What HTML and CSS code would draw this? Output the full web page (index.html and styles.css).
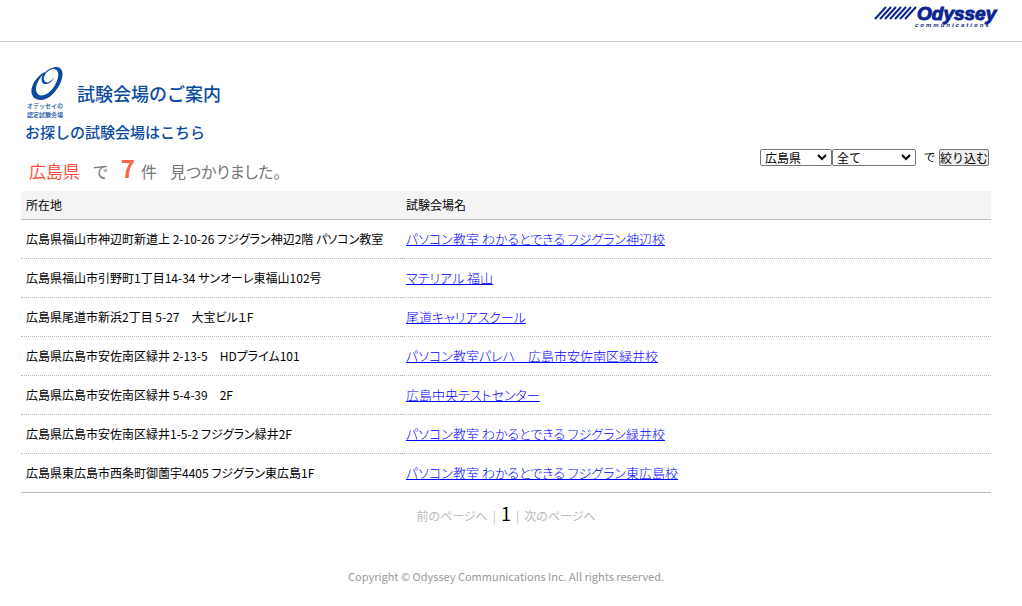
FILE: index.html
```html
<!DOCTYPE html>
<html lang="ja">
<head>
<meta charset="utf-8">
<title>試験会場のご案内</title>
<link rel="stylesheet" href="styles.css">
</head>
<body>
<header class="site-header">
  <svg class="brand" width="126" height="26" viewBox="0 0 126 26" role="img" aria-label="Odyssey communications">
    <path class="brand-lines" d="M1 15 12 3M6 15 17 3M11 15 22 3M16 15 27 3M21 15 32 3M26 15 37 3M31 15 42 3"/>
    <text class="brand-name" x="43" y="16">Odyssey</text>
    <text class="brand-sub" x="41" y="23">communications</text>
  </svg>
</header>
<main class="content">
  <div class="title-row">
    <svg class="emblem" width="40" height="54" viewBox="0 0 40 54" aria-hidden="true">
      <path fill="#0b4a9e" fill-rule="evenodd" d="M27 2C35 -1 39 4 37 12C35 22 25 34 16 34C8 34 5 28 7 21C9 14 16 7 22 5C13 12 9 22 12 27C15 32 23 29 28 22C34 14 36 3 28 3C22 4 18 10 19 14C20 18 26 17 29 11C27 18 19 20 17 16C15 11 20 4 27 2Z"/>
      <text class="emblem-text" x="2" y="42">オデッセイの</text>
      <text class="emblem-text" x="2" y="51">認定試験会場</text>
    </svg>
    <h1 class="title">試験会場のご案内</h1>
  </div>
  <h2 class="subtitle">お探しの試験会場はこちら</h2>
  <div class="summary">
    <p class="result"><span class="place">広島県</span><span>で</span><strong class="count">7</strong><span class="unit">件</span><span>見つかりました。</span></p>
    <form class="filter">
      <select class="select pref" aria-label="都道府県"><option>広島県</option></select>
      <select class="select exam" aria-label="試験"><option>全て</option></select>
      <span class="filter-word">で</span>
      <button class="filter-button" type="button">絞り込む</button>
    </form>
  </div>
  <table class="venues">
    <thead><tr><th class="address">所在地</th><th>試験会場名</th></tr></thead>
    <tbody>
      <tr><td>広島県福山市神辺町新道上 2-10-26 フジグラン神辺2階 パソコン教室</td><td><a href="#">パソコン教室 わかるとできる フジグラン神辺校</a></td></tr>
      <tr><td>広島県福山市引野町1丁目14-34 サンオーレ東福山102号</td><td><a href="#">マテリアル 福山</a></td></tr>
      <tr><td>広島県尾道市新浜2丁目 5-27　大宝ビル１F</td><td><a href="#">尾道キャリアスクール</a></td></tr>
      <tr><td>広島県広島市安佐南区緑井 2-13-5　HDプライム101</td><td><a href="#">パソコン教室パレハ　広島市安佐南区緑井校</a></td></tr>
      <tr><td>広島県広島市安佐南区緑井 5-4-39　2F</td><td><a href="#">広島中央テストセンター</a></td></tr>
      <tr><td>広島県広島市安佐南区緑井1-5-2 フジグラン緑井2F</td><td><a href="#">パソコン教室 わかるとできる フジグラン緑井校</a></td></tr>
      <tr><td>広島県東広島市西条町御薗宇4405 フジグラン東広島1F</td><td><a href="#">パソコン教室 わかるとできる フジグラン東広島校</a></td></tr>
    </tbody>
  </table>
  <nav class="pager"><span>前のページへ</span><span>|</span><strong class="current">1</strong><span>|</span><span>次のページへ</span></nav>
</main>
<footer class="footer">Copyright © Odyssey Communications Inc. All rights reserved.</footer>
</body>
</html>
```

FILE: styles.css
```css
* { box-sizing: border-box; }
body {
  margin: 0;
  background: #fff;
  color: #000;
  font: 12px/18px "Noto Sans CJK JP", sans-serif;
  font-feature-settings: "palt";
}
.site-header {
  display: flex;
  justify-content: flex-end;
  height: 42px;
  padding: 4px 22px 0 0;
  border-bottom: 1px solid #ccc;
}
.brand { overflow: visible; }
.brand-lines { fill: none; stroke: #0b2590; stroke-width: 2; }
.brand-name {
  font: italic bold 19px "Liberation Sans", sans-serif;
  fill: #0b2590;
  stroke: #0b2590;
  stroke-width: 1;
}
.brand-sub {
  font: italic bold 6px "Liberation Sans", sans-serif;
  letter-spacing: 2px;
  fill: #0b2590;
}
.content { padding: 24px 31px 0 21px; }
.title-row { display: flex; align-items: center; gap: 12px; padding-left: 4px; }
.emblem-text { font: 6px "Noto Sans CJK JP", sans-serif; font-weight: 500; fill: #0b4a9e; }
.title { margin: 0; font-size: 18px; line-height: 24px; font-weight: 500; color: #0b4a9e; font-feature-settings: normal; }
.subtitle { margin: 0; padding: 2px 0 0 4px; font-size: 15px; line-height: 20px; font-weight: 500; color: #0b4a9e; font-feature-settings: normal; }
.summary { display: flex; justify-content: space-between; align-items: flex-start; margin-top: 6px; height: 43px; }
.result {
  display: flex;
  align-items: baseline;
  gap: 13px;
  margin: 0;
  padding: 5px 0 0 8px;
  font-size: 16px;
  line-height: 30px;
  color: #777;
}
.place { font-size: 17px; color: #ff4f40; }
.count { font-size: 24px; font-weight: 700; color: #ff6347; }
.unit { margin-left: -7px; }
.filter { display: flex; align-items: center; padding: 0 2px 0 0; }
.select {
  appearance: none;
  height: 17px;
  padding: 0 16px 0 4px;
  border: 1px solid #767676;
  border-radius: 2px;
  background: #fff url("data:image/svg+xml,%3Csvg xmlns='http://www.w3.org/2000/svg' width='10' height='7'%3E%3Cpath d='M1 1l4 4 4-4' fill='none' stroke='%23000' stroke-width='2'/%3E%3C/svg%3E") no-repeat right 4px center;
  color: #000;
  font: 12px/15px "Noto Sans CJK JP", sans-serif;
}
.pref { width: 72px; }
.exam { width: 84px; }
.filter-word { padding: 0 4px 0 8px; }
.filter-button {
  height: 17px;
  padding: 0;
  border: 1px solid #767676;
  border-radius: 2px;
  background: #efefef;
  color: #000;
  font: 12px/15px "Noto Sans CJK JP", sans-serif;
}
.venues { width: 100%; border-collapse: collapse; border-bottom: 1px solid #bbb; }
.venues th {
  height: 28px;
  padding: 0 5px;
  background: #f4f4f4;
  border-bottom: 1px solid #bbb;
  font-weight: 400;
  text-align: left;
}
.address { width: 380px; }
.venues td { height: 39px; padding: 0 5px; border-bottom: 1px dotted #bbb; }
.venues tr:last-child td { border-bottom: 0; }
.venues a { font-size: 13px; font-weight: 300; color: #00f; }
.pager {
  display: flex;
  justify-content: center;
  align-items: baseline;
  gap: 5px;
  padding-top: 7px;
  line-height: 26px;
  color: #bbb;
}
.current { font-size: 18px; font-weight: 400; color: #000; }
.footer { padding: 38px 10px 20px 0; text-align: center; font-size: 11px; color: #999; }
```
